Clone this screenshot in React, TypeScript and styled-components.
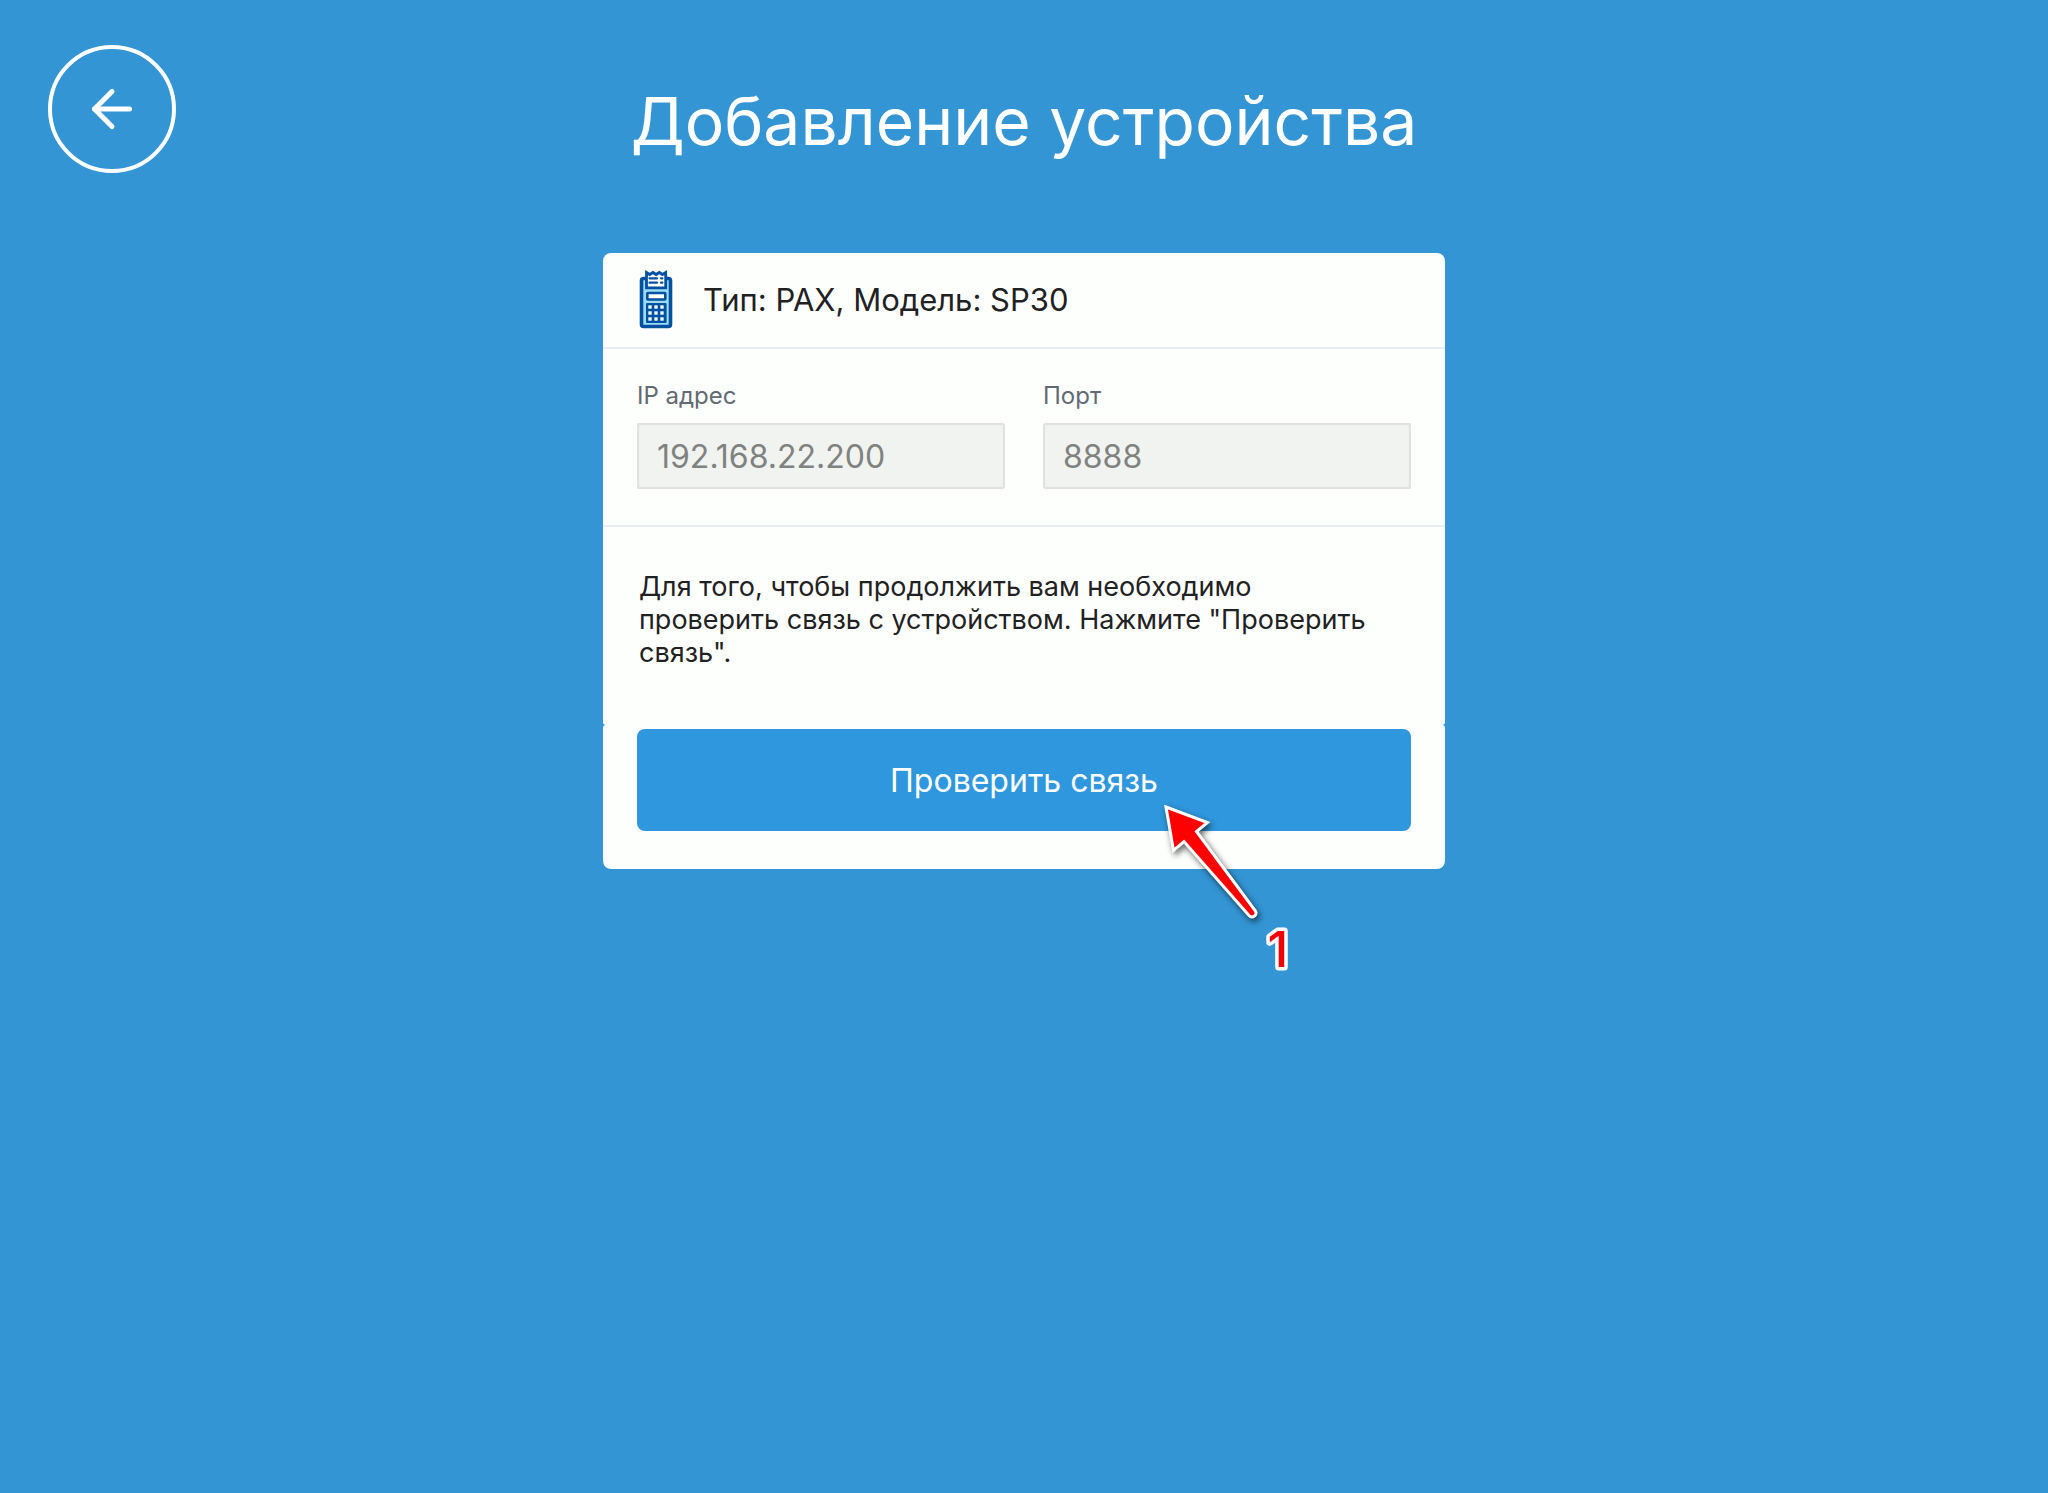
import React from "react";
import styled, { createGlobalStyle } from "styled-components";
import { ArrowLeft } from "lucide-react";

const GlobalStyle = createGlobalStyle`
  *, *::before, *::after { box-sizing: border-box; }
  body {
    margin: 0;
    background: #3395d4;
    color: #1f2123;
    font-family: Inter, "Noto Sans", sans-serif;
  }
`;

const Page = styled.div`
  min-height: 100vh;
  display: grid;
  grid-template-columns: 1fr minmax(0, 842px) 1fr;
  align-items: start;
`;

const Side = styled.nav`
  padding: 45px 48px;
`;

const BackButton = styled.button`
  display: flex;
  align-items: center;
  justify-content: center;
  width: 128px;
  height: 128px;
  padding: 0;
  border: 4px solid #ffffff;
  border-radius: 50%;
  background: transparent;
  color: #ffffff;
  cursor: pointer;
`;

const Main = styled.main`
  display: flex;
  flex-direction: column;
`;

const Title = styled.h1`
  margin: 0;
  padding: 79px 0 90px;
  color: #ffffff;
  font-size: 66px;
  font-weight: 400;
  line-height: 84px;
  text-align: center;
  white-space: nowrap;
`;

const Panel = styled.section`
  background: #fdfffc;
  border-radius: 8px 8px 3px 3px;
`;

const DeviceHeader = styled.header`
  display: flex;
  align-items: center;
  gap: 30px;
  padding: 17px 34px 18px;
  border-bottom: 2px solid #e8edf1;
`;

const DeviceName = styled.h2`
  margin: 0;
  font-size: 31px;
  font-weight: 400;
  line-height: 40px;
`;

const Fields = styled.div`
  display: grid;
  grid-template-columns: 1fr 1fr;
  gap: 38px;
  padding: 33px 34px 36px;
  border-bottom: 2px solid #e8edf1;
`;

const Field = styled.label`
  display: flex;
  flex-direction: column;
  gap: 13px;
  color: #626a72;
  font-size: 24px;
  line-height: 28px;
`;

const TextBox = styled.input`
  width: 100%;
  height: 66px;
  padding: 0 18px;
  border: 2px solid #e0e2df;
  border-radius: 2px;
  background: #f1f3f0;
  color: #80827f;
  font-family: inherit;
  font-size: 32px;
`;

const Hint = styled.p`
  margin: 0;
  padding: 43px 56px 56px 36px;
  font-size: 27px;
  line-height: 33px;
`;

const ActionPanel = styled(Panel)`
  position: relative;
  padding: 4px 34px 38px;
  border-radius: 3px 3px 8px 8px;
`;

const PrimaryButton = styled.button`
  width: 100%;
  height: 102px;
  padding: 0;
  border: 0;
  border-radius: 8px;
  background: #2f97dd;
  color: #ffffff;
  font-family: inherit;
  font-size: 32px;
  cursor: pointer;
`;

const Callout = styled.svg`
  position: absolute;
  top: 74px;
  left: 552px;
  pointer-events: none;
`;

const CalloutArrow = styled.path`
  fill: #ff0000;
  stroke: #ffffff;
  stroke-width: 3px;
  filter: drop-shadow(2px 3px 3px rgba(0, 0, 0, 0.6));
`;

const CalloutNumber = styled.text`
  fill: #f20008;
  stroke: #ffffff;
  stroke-width: 7px;
  stroke-linejoin: round;
  paint-order: stroke;
  font-size: 50px;
  font-weight: 500;
  text-anchor: middle;
`;

const keyRows = [37, 43, 49];
const keyColumns = [13, 19, 25];

function TerminalIcon() {
  return (
    <svg width="36" height="59" viewBox="0 0 36 59" fill="none" aria-hidden="true">
      <rect x="4.5" y="8.5" width="29" height="48" rx="2" fill="#9bdcfb" stroke="#05509f" strokeWidth="3.6" />
      <path
        d="M9.5 17.8V2.5l3.2 2 3.2-2 3.2 2 3.2-2 3.2 2 3.2-2v15.3z"
        fill="#fff"
        stroke="#05509f"
        strokeWidth="2.8"
      />
      <path d="M12.5 8.3h7.5M24 8.3h1.4M12.5 12.7h7.5M24 12.7h1.4" stroke="#05509f" strokeWidth="2.2" strokeLinecap="round" />
      <rect x="10.3" y="23" width="18" height="6.5" rx="0.5" fill="#fff" stroke="#05509f" strokeWidth="2.6" />
      <rect x="9" y="33" width="20.6" height="20" rx="1" fill="#05509f" />
      {keyRows.map((y) =>
        keyColumns.map((x) => (
          <rect key={`${x}-${y}`} x={x - 1.7} y={y - 1.7} width="3.4" height="3.4" fill="#e9f8ff" />
        )),
      )}
    </svg>
  );
}

export default function App() {
  return (
    <>
      <GlobalStyle />
      <Page>
        <Side>
          <BackButton type="button" aria-label="Назад">
            <ArrowLeft size={60} strokeWidth={2} />
          </BackButton>
        </Side>
        <Main>
          <Title>Добавление устройства</Title>
          <Panel>
            <DeviceHeader>
              <TerminalIcon />
              <DeviceName>Тип: PAX, Модель: SP30</DeviceName>
            </DeviceHeader>
            <Fields>
              <Field>
                IP адрес
                <TextBox type="text" defaultValue="192.168.22.200" readOnly />
              </Field>
              <Field>
                Порт
                <TextBox type="text" defaultValue="8888" readOnly />
              </Field>
            </Fields>
            <Hint>
              Для того, чтобы продолжить вам необходимо проверить связь с устройством. Нажмите
              "Проверить связь".
            </Hint>
          </Panel>
          <ActionPanel>
            <PrimaryButton type="button">Проверить связь</PrimaryButton>
            <Callout width="150" height="190" viewBox="0 0 150 190">
              <CalloutArrow d="M11 8L52.500 23.500L41.500 32.500L100.500 112Q102 115 99.500 117Q96.500 119 94 116.500L29 42.500L18.500 51.500Z" />
              <CalloutNumber x="123" y="168">
                1
              </CalloutNumber>
            </Callout>
          </ActionPanel>
        </Main>
      </Page>
    </>
  );
}
